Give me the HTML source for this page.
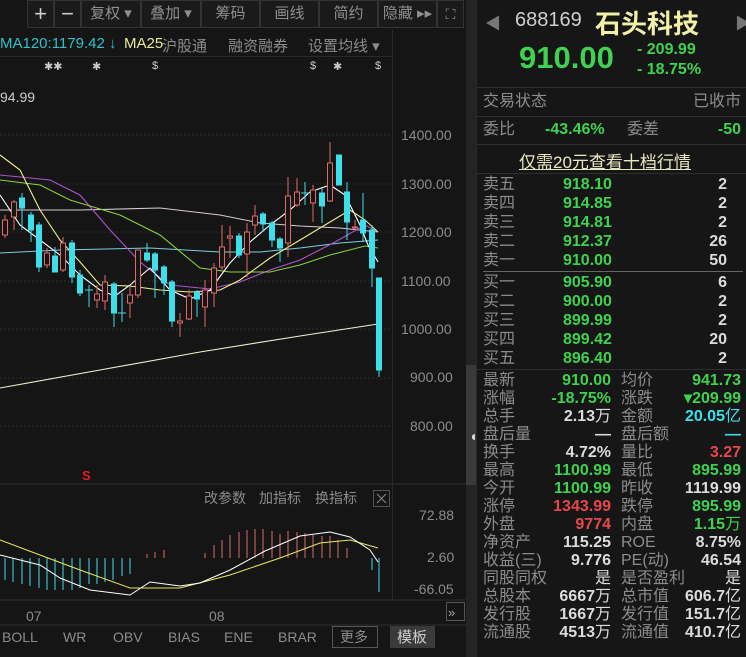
<!DOCTYPE html>
<html><head><meta charset="utf-8"><style>
*{margin:0;padding:0;box-sizing:border-box}
body{width:746px;height:657px;background:#151515;overflow:hidden;position:relative;font-family:"Liberation Sans","Noto Sans CJK SC",sans-serif;color:#8c8c8c}
.a{position:absolute;white-space:nowrap}
.tb{position:absolute;top:0;height:28px;border:1px solid #333;background:#1a1a1a;color:#8f8f8f;font-size:15px;line-height:26px;text-align:center}
.g{color:#3fd14f}.w{color:#dcdcdc}.r{color:#e8474b}.c{color:#3de0ea}
#rp{position:absolute;left:476px;top:0;width:270px;height:657px;background:#161616;border-left:1px solid #2a2a2a}
.row{position:absolute;left:6px;width:258px;font-size:16px;height:18px;line-height:18px}
.row span{position:absolute}
.hl{position:absolute;left:0;width:270px;height:1px;background:#2e2e2e}
</style></head><body>
<!-- toolbar -->
<div class="tb" style="left:27px;width:27px;font-size:22px;color:#ccc">+</div>
<div class="tb" style="left:54px;width:27px;font-size:22px;color:#ccc">−</div>
<div class="tb" style="left:81px;width:60px">复权 ▾</div>
<div class="tb" style="left:141px;width:60px">叠加 ▾</div>
<div class="tb" style="left:201px;width:59px">筹码</div>
<div class="tb" style="left:260px;width:59px">画线</div>
<div class="tb" style="left:319px;width:59px">简约</div>
<div class="tb" style="left:378px;width:59px">隐藏 ▸▸</div>
<div class="tb" style="left:437px;width:27px;font-size:14px">⛶</div>
<div class="a" style="left:0;top:35px;font-size:15px;color:#32c0c8">MA120:1179.42 ↓</div>
<div class="a" style="left:124px;top:35px;font-size:15px;color:#e8e8a0">MA25</div>
<div class="a" style="left:162px;top:35px;font-size:15px;color:#8c8c8c">沪股通</div>
<div class="a" style="left:228px;top:35px;font-size:15px;color:#8c8c8c">融资融券</div>
<div class="a" style="left:308px;top:35px;font-size:15px;color:#8c8c8c">设置均线 ▾</div>
<div class="a" style="left:0;top:56px;width:392px;height:1px;background:#2a2a2a"></div>
<div class="a" style="left:44px;top:60px;font-size:11px;color:#ccc">✱✱</div>
<div class="a" style="left:92px;top:60px;font-size:11px;color:#ccc">✱</div>
<div class="a" style="left:152px;top:60px;font-size:11px;color:#ccc">$</div>
<div class="a" style="left:310px;top:60px;font-size:11px;color:#ccc">$</div>
<div class="a" style="left:333px;top:60px;font-size:11px;color:#ccc">✱</div>
<div class="a" style="left:375px;top:60px;font-size:11px;color:#ccc">$</div>
<div class="a" style="left:0;top:89px;font-size:14px;color:#ccc">94.99</div>
<div class="a" style="left:392px;top:30px;width:1px;height:570px;background:#2a2a2a"></div>
<div class="a" style="left:466px;top:0;width:10px;height:657px;background:#242424"></div>
<div class="a" style="left:466px;top:365px;width:10px;height:120px;background:#3a3a3a"></div>
<div class="a" style="left:469px;top:428px;font-size:14px;color:#ddd">◖</div>
<!-- price axis -->
<div class="a" style="left:401px;top:127px;font-size:14px">1400.00</div>
<div class="a" style="left:401px;top:176px;font-size:14px">1300.00</div>
<div class="a" style="left:401px;top:224px;font-size:14px">1200.00</div>
<div class="a" style="left:401px;top:273px;font-size:14px">1100.00</div>
<div class="a" style="left:401px;top:321px;font-size:14px">1000.00</div>
<div class="a" style="left:410px;top:369px;font-size:14px">900.00</div>
<div class="a" style="left:410px;top:418px;font-size:14px">800.00</div>
<svg class="a" style="left:0;top:0" width="466" height="657">
<g stroke="#2c2c2c" stroke-dasharray="2,2">
<line x1="0" y1="135" x2="392" y2="135"/><line x1="0" y1="184" x2="392" y2="184"/><line x1="0" y1="232" x2="392" y2="232"/><line x1="0" y1="281" x2="392" y2="281"/><line x1="0" y1="329" x2="392" y2="329"/><line x1="0" y1="378" x2="392" y2="378"/><line x1="0" y1="426" x2="392" y2="426"/></g>
<line x1="0" y1="484" x2="466" y2="484" stroke="#2e2e2e"/>
<line x1="0" y1="600" x2="466" y2="600" stroke="#2e2e2e"/>
<line x1="0" y1="625" x2="466" y2="625" stroke="#2e2e2e"/>
<g fill="none" stroke-width="1.1">
<polyline stroke="#f0f0d0" points="0,388 100,370 200,352 300,336 378,324"/>
<polyline stroke="#d8c8d8" points="0,210 80,210 160,208 220,215 260,223 300,226 340,228 378,232"/>
<polyline stroke="#7ad0e0" points="0,253 60,250 150,248 220,252 260,252 300,248 340,243 378,240"/>
<polyline stroke="#b050d0" points="0,175 50,180 80,195 110,230 140,262 170,285 210,289 240,282 270,270 300,260 335,242 365,225 378,232"/>
<polyline stroke="#8ad040" points="0,180 40,185 70,200 120,215 160,235 200,268 230,272 270,272 300,265 330,255 365,246 378,248"/>
<polyline stroke="#f0f090" points="0,155 20,170 40,210 60,240 80,262 100,285 130,286 160,290 190,292 220,290 240,280 270,258 300,240 330,222 350,210 365,220 378,232"/>
<polyline stroke="#ffffff" points="0,195 20,225 40,240 60,255 80,275 100,290 115,296 130,285 150,268 170,290 190,299 210,290 230,263 250,242 270,225 290,210 310,192 330,185 345,195 360,225 368,245 378,262"/>
</g>
<g stroke="#e06a6a" fill="#151515">
<line x1="5" y1="215" x2="5" y2="238"/><rect x="2.5" y="220" width="5" height="15"/>
<line x1="14" y1="200" x2="14" y2="230"/><rect x="11.5" y="202" width="5" height="15"/>
<line x1="47" y1="248" x2="47" y2="268"/><rect x="44.5" y="253" width="5" height="12"/>
<line x1="63" y1="237" x2="63" y2="272"/><rect x="60.5" y="243" width="5" height="27"/>
<line x1="97" y1="285" x2="97" y2="308"/><rect x="94.5" y="294" width="5" height="6"/>
<line x1="105" y1="275" x2="105" y2="310"/><rect x="102.5" y="282" width="5" height="19"/>
<line x1="130" y1="287" x2="130" y2="318"/><rect x="127.5" y="295" width="5" height="8"/>
<line x1="138" y1="250" x2="138" y2="298"/><rect x="135.5" y="250" width="5" height="45"/>
<line x1="180" y1="313" x2="180" y2="337"/><rect x="177.5" y="321" width="5" height="2"/>
<line x1="189" y1="290" x2="189" y2="320"/><rect x="186.5" y="296" width="5" height="23"/>
<line x1="205" y1="280" x2="205" y2="327"/><rect x="202.5" y="290" width="5" height="17"/>
<line x1="214" y1="263" x2="214" y2="307"/><rect x="211.5" y="268" width="5" height="25"/>
<line x1="222" y1="225" x2="222" y2="270"/><rect x="219.5" y="247" width="5" height="20"/>
<line x1="230" y1="226" x2="230" y2="258"/><rect x="227.5" y="236" width="5" height="2"/>
<line x1="247" y1="223" x2="247" y2="277"/><rect x="244.5" y="232" width="5" height="22"/>
<line x1="255" y1="205" x2="255" y2="235"/><rect x="252.5" y="216" width="5" height="9"/>
<line x1="288" y1="177" x2="288" y2="257"/><rect x="285.5" y="196" width="5" height="47"/>
<line x1="297" y1="178" x2="297" y2="207"/><rect x="294.5" y="192" width="5" height="13"/>
<line x1="313" y1="185" x2="313" y2="222"/><rect x="310.5" y="190" width="5" height="13"/>
<line x1="330" y1="142" x2="330" y2="202"/><rect x="327.5" y="163" width="5" height="38"/>
<line x1="355" y1="220" x2="355" y2="230"/><rect x="352.5" y="227" width="5" height="1"/>
</g>
<g stroke="#3de0ea" fill="#3de0ea">
<line x1="22" y1="193" x2="22" y2="230"/><rect x="19.5" y="198" width="5" height="10"/>
<line x1="31" y1="212" x2="31" y2="242"/><rect x="28.5" y="215" width="5" height="15"/>
<line x1="39" y1="222" x2="39" y2="272"/><rect x="36.5" y="225" width="5" height="42"/>
<line x1="55" y1="247" x2="55" y2="272"/><rect x="52.5" y="256" width="5" height="16"/>
<line x1="72" y1="240" x2="72" y2="283"/><rect x="69.5" y="243" width="5" height="34"/>
<line x1="80" y1="270" x2="80" y2="296"/><rect x="77.5" y="275" width="5" height="18"/>
<line x1="89" y1="285" x2="89" y2="307"/><line x1="85" y1="290" x2="93" y2="290"/>
<line x1="114" y1="282" x2="114" y2="327"/><rect x="111.5" y="284" width="5" height="29"/>
<line x1="122" y1="293" x2="122" y2="322"/><line x1="118" y1="313" x2="126" y2="313"/>
<line x1="147" y1="243" x2="147" y2="262"/><rect x="144.5" y="253" width="5" height="7"/>
<line x1="155" y1="252" x2="155" y2="298"/><rect x="152.5" y="254" width="5" height="16"/>
<line x1="164" y1="265" x2="164" y2="295"/><rect x="161.5" y="267" width="5" height="16"/>
<line x1="172" y1="280" x2="172" y2="327"/><rect x="169.5" y="282" width="5" height="39"/>
<line x1="197" y1="290" x2="197" y2="317"/><rect x="194.5" y="292" width="5" height="7"/>
<line x1="239" y1="233" x2="239" y2="258"/><rect x="236.5" y="236" width="5" height="19"/>
<line x1="263" y1="212" x2="263" y2="232"/><rect x="260.5" y="214" width="5" height="10"/>
<line x1="272" y1="221" x2="272" y2="247"/><rect x="269.5" y="223" width="5" height="17"/>
<line x1="280" y1="237" x2="280" y2="262"/><rect x="277.5" y="239" width="5" height="9"/>
<line x1="305" y1="182" x2="305" y2="205"/><line x1="301" y1="193" x2="309" y2="193"/>
<line x1="322" y1="188" x2="322" y2="223"/><rect x="319.5" y="193" width="5" height="13"/>
<rect x="336.5" y="155" width="5" height="30"/>
<line x1="347" y1="182" x2="347" y2="240"/><rect x="344.5" y="192" width="5" height="30"/>
<line x1="363" y1="193" x2="363" y2="242"/><rect x="360.5" y="220" width="5" height="13"/>
<line x1="372" y1="225" x2="372" y2="287"/><rect x="369.5" y="230" width="5" height="38"/>
<line x1="379" y1="278" x2="379" y2="377"/><rect x="376.5" y="278" width="5" height="92"/>
</g>
<text x="82" y="480" fill="#e02020" font-size="13" font-weight="bold" font-family="Liberation Sans">S</text>
<!-- MACD -->
<g stroke="#3de0ea"><line x1="5" y1="558" x2="5" y2="580"/><line x1="13" y1="558" x2="13" y2="582"/><line x1="22" y1="558" x2="22" y2="584"/><line x1="30" y1="558" x2="30" y2="586"/><line x1="39" y1="558" x2="39" y2="588"/><line x1="47" y1="558" x2="47" y2="590"/><line x1="55" y1="558" x2="55" y2="590"/><line x1="63" y1="558" x2="63" y2="590"/><line x1="72" y1="558" x2="72" y2="590"/><line x1="80" y1="558" x2="80" y2="588"/><line x1="89" y1="558" x2="89" y2="584"/><line x1="97" y1="558" x2="97" y2="584"/><line x1="105" y1="558" x2="105" y2="582"/><line x1="113" y1="558" x2="113" y2="580"/><line x1="122" y1="558" x2="122" y2="576"/><line x1="130" y1="558" x2="130" y2="574"/><line x1="372" y1="558" x2="372" y2="570"/><line x1="379" y1="558" x2="379" y2="592"/></g>
<g stroke="#e06a6a"><line x1="147" y1="558" x2="147" y2="554"/><line x1="155" y1="558" x2="155" y2="552"/><line x1="164" y1="558" x2="164" y2="550"/><line x1="205" y1="558" x2="205" y2="553"/><line x1="214" y1="558" x2="214" y2="545"/><line x1="222" y1="558" x2="222" y2="540"/><line x1="230" y1="558" x2="230" y2="535"/><line x1="239" y1="558" x2="239" y2="532"/><line x1="247" y1="558" x2="247" y2="530"/><line x1="255" y1="558" x2="255" y2="529"/><line x1="263" y1="558" x2="263" y2="529"/><line x1="272" y1="558" x2="272" y2="531"/><line x1="280" y1="558" x2="280" y2="534"/><line x1="288" y1="558" x2="288" y2="531"/><line x1="297" y1="558" x2="297" y2="532"/><line x1="305" y1="558" x2="305" y2="533"/><line x1="313" y1="558" x2="313" y2="535"/><line x1="322" y1="558" x2="322" y2="536"/><line x1="330" y1="558" x2="330" y2="536"/><line x1="338" y1="558" x2="338" y2="540"/><line x1="347" y1="558" x2="347" y2="548"/></g>
<polyline fill="none" stroke="#e8e860" points="0,540 40,555 80,570 130,588 180,588 230,575 280,558 320,543 350,540 378,548"/>
<polyline fill="none" stroke="#ffffff" points="0,555 40,565 60,578 90,590 130,595 150,582 180,586 200,583 230,570 265,551 300,536 330,532 350,537 370,550 378,562"/>
<text x="204" y="503" fill="#8c8c8c" font-size="14">改参数</text>
<text x="259" y="503" fill="#8c8c8c" font-size="14">加指标</text>
<text x="315" y="503" fill="#8c8c8c" font-size="14">换指标</text>
<rect x="373.5" y="490.5" width="16" height="16" fill="none" stroke="#555"/>
<path d="M377 494 L386 503 M386 494 L377 503" stroke="#888"/>
<text x="419" y="520" fill="#8c8c8c" font-size="14">72.88</text>
<text x="427" y="562" fill="#8c8c8c" font-size="14">2.60</text>
<text x="414" y="594" fill="#8c8c8c" font-size="14">-66.05</text>
<text x="26" y="621" fill="#8c8c8c" font-size="14">07</text>
<text x="209" y="621" fill="#8c8c8c" font-size="14">08</text>
<rect x="446.5" y="602.5" width="18" height="18" fill="none" stroke="#555"/>
<text x="448" y="617" fill="#aaa" font-size="13">»</text>
<g fill="#8c8c8c" font-size="14"><text x="2" y="642">BOLL</text><text x="63" y="642">WR</text><text x="113" y="642">OBV</text><text x="168" y="642">BIAS</text><text x="224" y="642">ENE</text><text x="278" y="642">BRAR</text><text x="340" y="642">更多</text></g>
<rect x="332.5" y="626.5" width="45" height="21" fill="none" stroke="#555"/>
<rect x="390" y="626" width="45" height="22" fill="#3a3a3a"/>
<text x="397" y="642" fill="#ccc" font-size="15">模板</text>
</svg>
<!-- right panel -->
<div id="rp">
<div class="a" style="left:8px;top:10px;font-size:16px;color:#777">◀</div>
<div class="a" style="left:258px;top:10px;font-size:16px;color:#777">▶</div>
<div class="a" style="left:38px;top:9px;font-size:20px;color:#cfcfcf">688169</div>
<div class="a" style="left:118px;top:4px;font-size:26px;color:#f2f0a8;font-weight:bold">石头科技</div>
<div class="a g" style="left:42px;top:40px;font-size:31px;font-weight:bold">910.00</div>
<div class="a g" style="left:160px;top:41px;font-size:16px;font-weight:bold">- 209.99</div>
<div class="a g" style="left:160px;top:61px;font-size:16px;font-weight:bold">- 18.75%</div>
<div class="hl" style="top:87px"></div>
<div class="row" style="top:93px"><span style="left:0">交易状态</span><span style="right:0">已收市</span></div>
<div class="hl" style="top:116px"></div>
<div class="row" style="top:121px"><span style="left:0">委比</span><span class="g" style="left:62px;font-weight:bold">-43.46%</span><span style="left:144px">委差</span><span class="g" style="right:0;font-weight:bold">-50</span></div>
<div class="hl" style="top:144px"></div>
<div class="a" style="left:42px;top:148px;font-size:17px;color:#e8e8c0;text-decoration:underline">仅需20元查看十档行情</div>
<div class="hl" style="top:173px"></div>
<div class="row" style="top:176px"><span style="left:0">卖五</span><span class="g" style="left:80px;font-weight:bold">918.10</span><span class="w" style="left:194px;width:50px;text-align:right;font-weight:bold">2</span></div>
<div class="row" style="top:195px"><span style="left:0">卖四</span><span class="g" style="left:80px;font-weight:bold">914.85</span><span class="w" style="left:194px;width:50px;text-align:right;font-weight:bold">2</span></div>
<div class="row" style="top:214px"><span style="left:0">卖三</span><span class="g" style="left:80px;font-weight:bold">914.81</span><span class="w" style="left:194px;width:50px;text-align:right;font-weight:bold">2</span></div>
<div class="row" style="top:233px"><span style="left:0">卖二</span><span class="g" style="left:80px;font-weight:bold">912.37</span><span class="w" style="left:194px;width:50px;text-align:right;font-weight:bold">26</span></div>
<div class="row" style="top:252px"><span style="left:0">卖一</span><span class="g" style="left:80px;font-weight:bold">910.00</span><span class="w" style="left:194px;width:50px;text-align:right;font-weight:bold">50</span></div>
<div class="a" style="left:6px;top:271px;width:260px;height:1px;background:#666"></div>
<div class="row" style="top:274px"><span style="left:0">买一</span><span class="g" style="left:80px;font-weight:bold">905.90</span><span class="w" style="left:194px;width:50px;text-align:right;font-weight:bold">6</span></div>
<div class="row" style="top:293px"><span style="left:0">买二</span><span class="g" style="left:80px;font-weight:bold">900.00</span><span class="w" style="left:194px;width:50px;text-align:right;font-weight:bold">2</span></div>
<div class="row" style="top:312px"><span style="left:0">买三</span><span class="g" style="left:80px;font-weight:bold">899.99</span><span class="w" style="left:194px;width:50px;text-align:right;font-weight:bold">2</span></div>
<div class="row" style="top:331px"><span style="left:0">买四</span><span class="g" style="left:80px;font-weight:bold">899.42</span><span class="w" style="left:194px;width:50px;text-align:right;font-weight:bold">20</span></div>
<div class="row" style="top:350px"><span style="left:0">买五</span><span class="g" style="left:80px;font-weight:bold">896.40</span><span class="w" style="left:194px;width:50px;text-align:right;font-weight:bold">2</span></div>
<div class="hl" style="top:369px"></div>
<div style="position:absolute;left:6px;top:372px;width:260px;font-weight:bold">
<div class="row" style="left:0;top:0"><span style="left:0;font-weight:normal">最新</span><span class="g" style="right:130px">910.00</span><span style="left:138px;font-weight:normal">均价</span><span class="g" style="right:0">941.73</span></div>
<div class="row" style="left:0;top:18px"><span style="left:0;font-weight:normal">涨幅</span><span class="g" style="right:130px">-18.75%</span><span style="left:138px;font-weight:normal">涨跌</span><span class="g" style="right:0">▾209.99</span></div>
<div class="row" style="left:0;top:36px"><span style="left:0;font-weight:normal">总手</span><span class="w" style="right:130px">2.13<b style="font-weight:normal">万</b></span><span style="left:138px;font-weight:normal">金额</span><span class="c" style="right:0">20.05<b style="font-weight:normal">亿</b></span></div>
<div class="row" style="left:0;top:54px"><span style="left:0;font-weight:normal">盘后量</span><span class="w" style="right:130px">—</span><span style="left:138px;font-weight:normal">盘后额</span><span class="c" style="right:0">—</span></div>
<div class="row" style="left:0;top:72px"><span style="left:0;font-weight:normal">换手</span><span class="w" style="right:130px">4.72%</span><span style="left:138px;font-weight:normal">量比</span><span class="r" style="right:0">3.27</span></div>
<div class="row" style="left:0;top:90px"><span style="left:0;font-weight:normal">最高</span><span class="g" style="right:130px">1100.99</span><span style="left:138px;font-weight:normal">最低</span><span class="g" style="right:0">895.99</span></div>
<div class="row" style="left:0;top:108px"><span style="left:0;font-weight:normal">今开</span><span class="g" style="right:130px">1100.99</span><span style="left:138px;font-weight:normal">昨收</span><span class="w" style="right:0">1119.99</span></div>
<div class="row" style="left:0;top:126px"><span style="left:0;font-weight:normal">涨停</span><span class="r" style="right:130px">1343.99</span><span style="left:138px;font-weight:normal">跌停</span><span class="g" style="right:0">895.99</span></div>
<div class="row" style="left:0;top:144px"><span style="left:0;font-weight:normal">外盘</span><span class="r" style="right:130px">9774</span><span style="left:138px;font-weight:normal">内盘</span><span class="g" style="right:0">1.15<b style="font-weight:normal">万</b></span></div>
<div class="row" style="left:0;top:162px"><span style="left:0;font-weight:normal">净资产</span><span class="w" style="right:130px">115.25</span><span style="left:138px;font-weight:normal">ROE</span><span class="w" style="right:0">8.75%</span></div>
<div class="row" style="left:0;top:180px"><span style="left:0;font-weight:normal">收益(三)</span><span class="w" style="right:130px">9.776</span><span style="left:138px;font-weight:normal">PE(动)</span><span class="w" style="right:0">46.54</span></div>
<div class="row" style="left:0;top:198px"><span style="left:0;font-weight:normal">同股同权</span><span class="w" style="right:130px;font-weight:normal">是</span><span style="left:138px;font-weight:normal">是否盈利</span><span class="w" style="right:0;font-weight:normal">是</span></div>
<div class="row" style="left:0;top:216px"><span style="left:0;font-weight:normal">总股本</span><span class="w" style="right:130px">6667<b style="font-weight:normal">万</b></span><span style="left:138px;font-weight:normal">总市值</span><span class="w" style="right:0">606.7<b style="font-weight:normal">亿</b></span></div>
<div class="row" style="left:0;top:234px"><span style="left:0;font-weight:normal">发行股</span><span class="w" style="right:130px">1667<b style="font-weight:normal">万</b></span><span style="left:138px;font-weight:normal">发行值</span><span class="w" style="right:0">151.7<b style="font-weight:normal">亿</b></span></div>
<div class="row" style="left:0;top:252px"><span style="left:0;font-weight:normal">流通股</span><span class="w" style="right:130px">4513<b style="font-weight:normal">万</b></span><span style="left:138px;font-weight:normal">流通值</span><span class="w" style="right:0">410.7<b style="font-weight:normal">亿</b></span></div>
</div>
</div>
</body></html>
